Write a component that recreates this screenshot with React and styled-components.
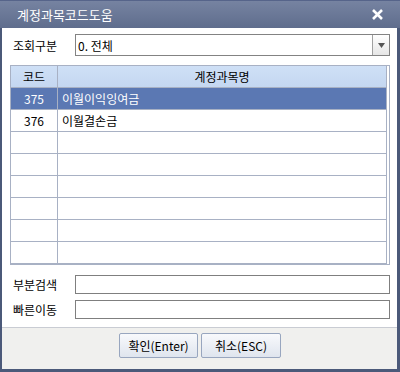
import React from "react";
import styled, { createGlobalStyle } from "styled-components";

const Global = createGlobalStyle`
  html, body { margin: 0; padding: 0; background: #fff; }
  body { font-family: "Noto Sans CJK KR", "Noto Sans", sans-serif; }
  * { box-sizing: border-box; }
`;

const Window = styled.div`
  width: 400px;
  height: 372px;
  background: #4b5979;
  display: flex;
  flex-direction: column;
  padding: 0 3px 3px 2px;
`;

const TitleBar = styled.div`
  height: 28px;
  margin: 0 -3px 0 -2px;
  background: linear-gradient(#7683a1, #5f6d8d);
  border-top: 1px solid #56648a;
  display: flex;
  align-items: center;
  justify-content: space-between;
  padding: 0 17px 1px 17px;
  color: #fff;
  font-size: 13px;
`;

const Body = styled.div`
  flex: 1;
  background: #fff;
  padding: 6px 7px 0 8px;
  display: flex;
  flex-direction: column;
`;

const FieldRow = styled.div`
  display: flex;
  align-items: center;
  height: ${(p) => p.$h}px;
  margin-top: ${(p) => p.$mt || 0}px;
`;

const Label = styled.div`
  width: 65px;
  padding-left: 3px;
  font-size: 12px;
  color: #000;
`;

const Select = styled.div`
  flex: 1;
  height: 100%;
  border: 1px solid #838383;
  display: flex;
  font-size: 12px;
`;

const SelectValue = styled.div`
  flex: 1;
  padding-left: 2px;
  display: flex;
  align-items: center;
`;

const SelectButton = styled.div`
  width: 17px;
  border-left: 1px solid #a0a0a0;
  background: linear-gradient(#ffffff, #e6e6e6);
  display: flex;
  align-items: center;
  justify-content: center;
`;

const TextInput = styled.div`
  flex: 1;
  height: 100%;
  border: 1px solid #7f7f7f;
  background: #fff;
`;

const GridFrame = styled.div`
  margin-top: 9px;
  border: 1px solid #a8b1c4;
  padding-right: 2px;
  display: flex;
  flex-direction: column;
`;

const GridRow = styled.div`
  display: grid;
  grid-template-columns: 47px 1fr;
  height: 22px;
  border-bottom: 1px solid #a8b1c4;
  border-right: 1px solid #a8b1c4;
  background: ${(p) =>
    p.$header
      ? "linear-gradient(#cfe0f6, #c4d7f1)"
      : p.$selected
      ? "#5b78b3"
      : "#fff"};
  color: ${(p) => (p.$selected ? "#fff" : "#000")};
  font-size: 12px;
`;

const Cell = styled.div`
  display: flex;
  align-items: center;
  justify-content: ${(p) => (p.$center ? "center" : "flex-start")};
  padding-left: ${(p) => (p.$center ? 0 : 4)}px;
  border-right: ${(p) => (p.$divider ? "1px solid #a8b1c4" : "none")};
`;

const Footer = styled.div`
  height: 42px;
  background: #f0f0ee;
  border-top: 1px solid #c9ccd3;
  display: flex;
  justify-content: center;
  align-items: flex-start;
  padding-top: 5px;
  padding-left: 1px;
  gap: 3px;
`;

const Button = styled.div`
  width: ${(p) => p.$w}px;
  height: 25px;
  border: 1px solid #98a6bf;
  border-radius: 2px;
  background: linear-gradient(#f8f9fc, #dfe5ee);
  font-size: 12px;
  display: flex;
  align-items: center;
  justify-content: center;
  color: #000;
`;

const rows = [
  { code: "375", name: "이월이익잉여금", selected: true },
  { code: "376", name: "이월결손금" },
  {}, {}, {}, {}, {}, {},
];

export default function App() {
  return (
    <>
      <Global />
      <Window>
        <TitleBar>
          <span>계정과목코드도움</span>
          <svg width="11" height="11" viewBox="0 0 11 11">
            <path d="M1 1 L10 10 M10 1 L1 10" stroke="#fff" strokeWidth="2.6" />
          </svg>
        </TitleBar>
        <Body>
          <FieldRow $h={22}>
            <Label>조회구분</Label>
            <Select>
              <SelectValue>0. 전체</SelectValue>
              <SelectButton>
                <svg width="7" height="5" viewBox="0 0 7 5">
                  <path d="M0 0 H7 L3.5 5 Z" fill="#555" />
                </svg>
              </SelectButton>
            </Select>
          </FieldRow>
          <GridFrame>
            <GridRow $header>
              <Cell $center $divider>코드</Cell>
              <Cell $center>계정과목명</Cell>
            </GridRow>
            {rows.map((r, i) => (
              <GridRow key={i} $selected={r.selected}>
                <Cell $center $divider>{r.code}</Cell>
                <Cell>{r.name}</Cell>
              </GridRow>
            ))}
          </GridFrame>
          <FieldRow $h={19} $mt={10}>
            <Label>부분검색</Label>
            <TextInput />
          </FieldRow>
          <FieldRow $h={19} $mt={6}>
            <Label>빠른이동</Label>
            <TextInput />
          </FieldRow>
        </Body>
        <Footer>
          <Button $w={79}>확인(Enter)</Button>
          <Button $w={80}>취소(ESC)</Button>
        </Footer>
      </Window>
    </>
  );
}
